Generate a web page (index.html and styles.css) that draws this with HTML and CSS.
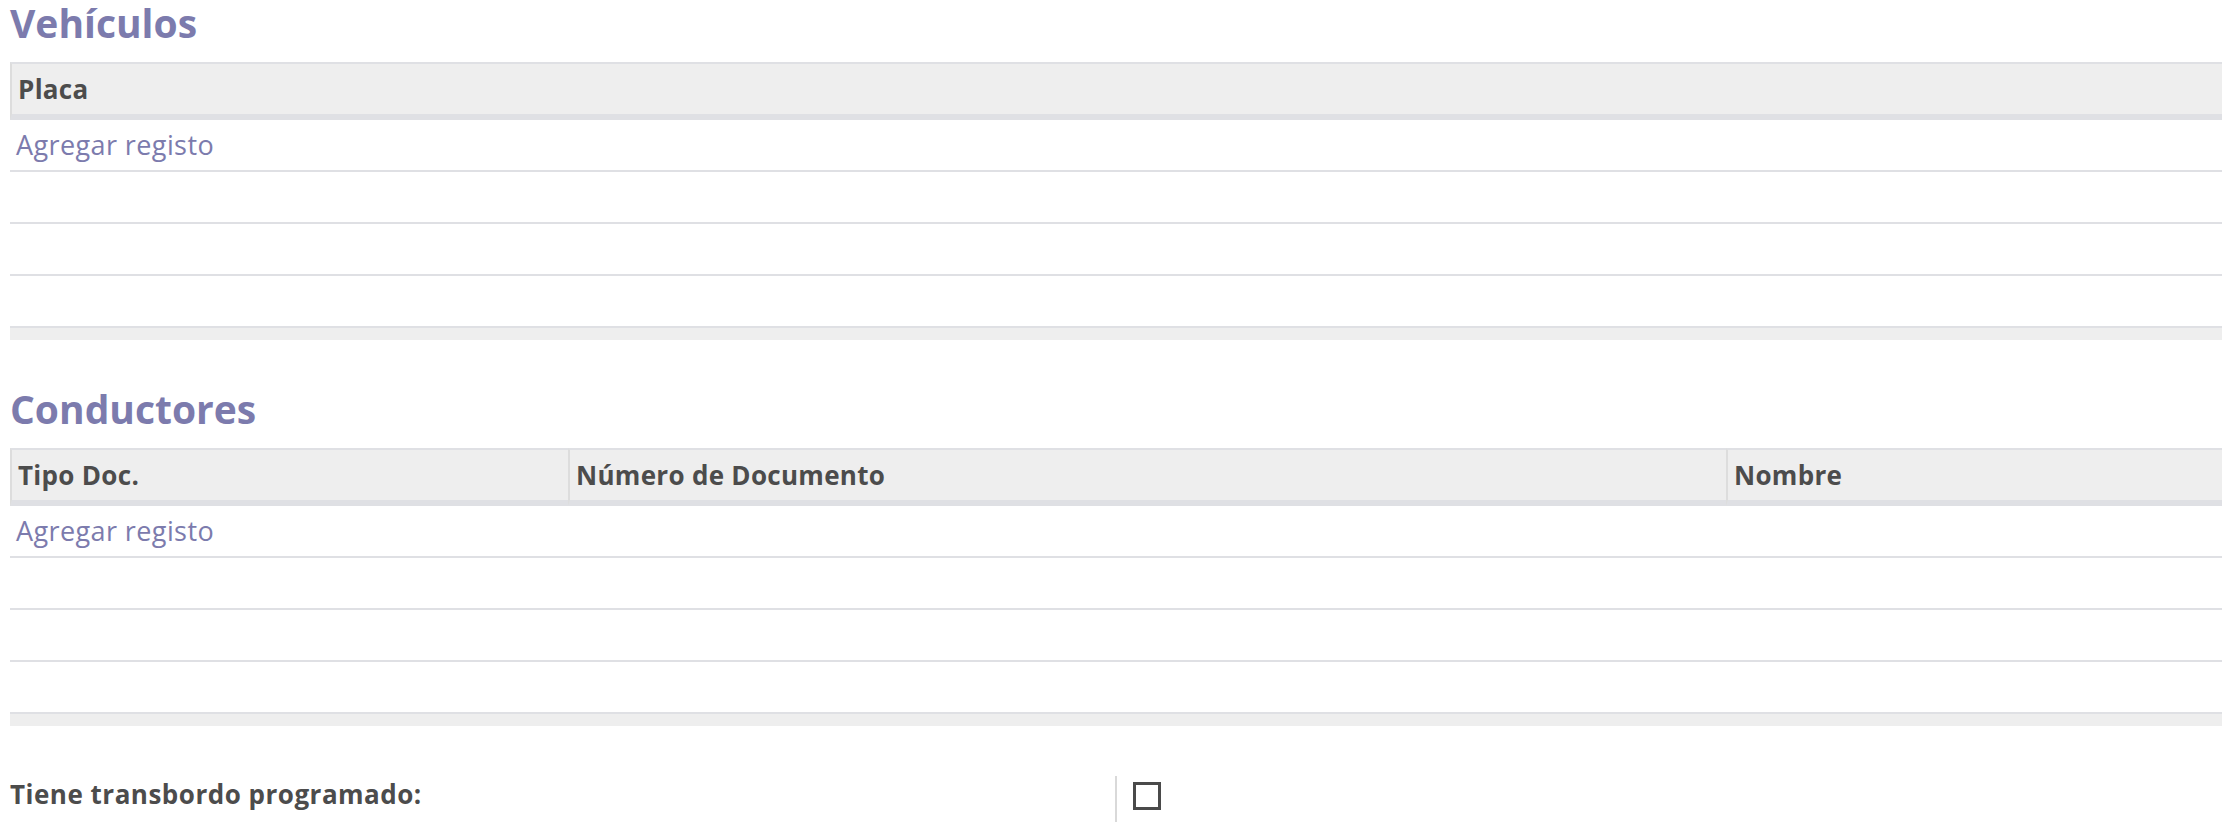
FILE: index.html
```html
<!DOCTYPE html>
<html lang="es">

<head>
    <meta charset="UTF-8">
    <title>Vehículos y Conductores</title>
    <link rel="stylesheet" href="styles.css">
</head>

<body>
    <div class="sheet">
        <div class="separator">Vehículos</div>
        <div class="x2many">
            <table class="list">
                <thead>
                    <tr>
                        <th>Placa</th>
                    </tr>
                </thead>
                <tbody>
                    <tr>
                        <td><a href="#" class="add-line">Agregar registo</a></td>
                    </tr>
                    <tr><td>&nbsp;</td></tr>
                    <tr><td>&nbsp;</td></tr>
                    <tr><td>&nbsp;</td></tr>
                </tbody>
                <tfoot>
                    <tr><td></td></tr>
                </tfoot>
            </table>
        </div>

        <div class="separator">Conductores</div>
        <div class="x2many">
            <table class="list">
                <colgroup>
                    <col class="col-tipo">
                    <col class="col-numero">
                    <col>
                </colgroup>
                <thead>
                    <tr>
                        <th>Tipo Doc.</th>
                        <th>Número de Documento</th>
                        <th>Nombre</th>
                    </tr>
                </thead>
                <tbody>
                    <tr>
                        <td colspan="3"><a href="#" class="add-line">Agregar registo</a></td>
                    </tr>
                    <tr><td colspan="3">&nbsp;</td></tr>
                    <tr><td colspan="3">&nbsp;</td></tr>
                    <tr><td colspan="3">&nbsp;</td></tr>
                </tbody>
                <tfoot>
                    <tr><td colspan="3"></td></tr>
                </tfoot>
            </table>
        </div>

        <div class="field-row">
            <label class="field-label">Tiene transbordo programado:</label>
            <div class="field-value">
                <span class="checkbox"></span>
            </div>
        </div>
    </div>
</body>

</html>
```

FILE: styles.css
```css
body {
    margin: 0;
    background: #ffffff;
    font-family: "Open Sans", "Liberation Sans", sans-serif;
    font-size: 26px;
    color: #4c4c4c;
}

.sheet {
    padding: 0 10px;
}

.separator {
    font-size: 39px;
    font-weight: bold;
    line-height: 46px;
    color: #7c7bad;
    margin-bottom: 16px;
}

.x2many {
    margin-bottom: 46px;
}

.list {
    width: 100%;
    border-spacing: 0;
    table-layout: fixed;
}

.list th {
    background: #eeeeee;
    text-align: left;
    font-weight: bold;
    line-height: 50px;
    letter-spacing: 0.3px;
    padding: 0 6px;
    border-top: 2px solid #dfe0e4;
    border-bottom: 6px solid #dfe0e4;
    border-left: 2px solid #dddddd;
    white-space: nowrap;
}

.list tbody td {
    line-height: 50px;
    padding: 0 6px;
    border-bottom: 2px solid #dfe0e4;
}

.list tfoot td {
    height: 12px;
    padding: 0;
    background: #eeeeee;
}

.col-tipo {
    width: 558px;
}

.col-numero {
    width: 1158px;
}

.add-line {
    color: #7c7bad;
    text-decoration: none;
    font-size: 27px;
    letter-spacing: 0.4px;
}

.field-row {
    display: grid;
    grid-template-columns: 1107px 1fr;
    margin-top: 50px;
}

.field-label {
    font-weight: bold;
    line-height: 36px;
    letter-spacing: 0.5px;
    padding-bottom: 24px;
    border-right: 2px solid #d9d9d9;
}

.field-value {
    padding: 6px 16px;
}

.checkbox {
    display: block;
    width: 22px;
    height: 22px;
    border: 3px solid #4a4a4a;
}
```
